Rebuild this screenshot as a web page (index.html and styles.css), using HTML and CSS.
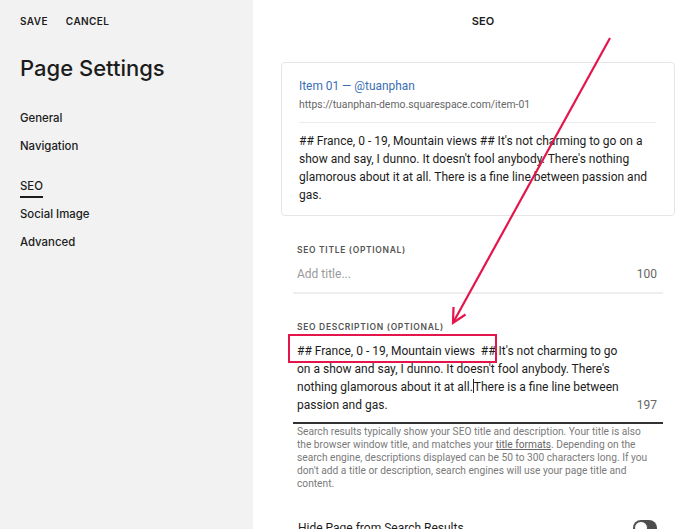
FILE: index.html
```html
<!DOCTYPE html>
<html lang="en">
<head>
    <meta charset="UTF-8">
    <title>Page Settings</title>
    <link rel="stylesheet" href="styles.css">
</head>
<body>

    <div class="sidebar">
        <div class="actions">
            <span>SAVE</span>
            <span>CANCEL</span>
        </div>
        <h1>Page Settings</h1>
        <ul class="nav">
            <li>General</li>
            <li class="gap-after">Navigation</li>
            <li class="active">SEO</li>
            <li>Social Image</li>
            <li>Advanced</li>
        </ul>
    </div>

    <div class="panel">
        <div class="panel-title">SEO</div>

        <div class="preview-card">
            <div class="preview-title">Item 01 — @tuanphan</div>
            <div class="preview-url">https://tuanphan-demo.squarespace.com/item-01</div>
            <p class="preview-text">## France, 0 - 19, Mountain views ## It's not charming to go on a show and say, I dunno. It doesn't fool anybody. There's nothing glamorous about it at all. There is a fine line between passion and gas.</p>
        </div>

        <div class="field">
            <div class="field-label">SEO TITLE (OPTIONAL)</div>
            <div class="field-input">
                <span class="placeholder">Add title...</span>
                <span class="count">100</span>
            </div>
        </div>

        <div class="field">
            <div class="field-label second">SEO DESCRIPTION (OPTIONAL)</div>
            <div class="field-input focused">
                <span class="desc-text">## France, 0 - 19, Mountain views&nbsp; ## It's not charming to go on a show and say, I dunno. It doesn't fool anybody. There's nothing glamorous about it at all.<span class="caret"></span>There is a fine line between passion and gas.</span>
                <span class="count">197</span>
            </div>
            <p class="help">Search results typically show your SEO title and description. Your title is also the browser window title, and matches your <u>title formats</u>. Depending on the search engine, descriptions displayed can be 50 to 300 characters long. If you don't add a title or description, search engines will use your page title and content.</p>
        </div>

        <div class="toggle-row">
            <span>Hide Page from Search Results</span>
            <span class="toggle"></span>
        </div>

        <!-- annotation drawn over the screenshot -->
        <div class="highlight-box"></div>
        <svg class="arrow" width="447" height="529" viewBox="0 0 447 529">
            <line x1="357" y1="38" x2="201" y2="321" stroke="#e3154a" stroke-width="2.2"/>
            <polyline points="200.5,307 200,323 212.5,314.5" fill="none" stroke="#e3154a" stroke-width="2.2" stroke-linejoin="miter"/>
        </svg>
    </div>

</body>
</html>
```

FILE: styles.css
```css
body {
    margin: 0;
    height: 529px;
    overflow: hidden;
    display: flex;
    font-family: "Inter", "Liberation Sans", sans-serif;
    color: #1c1c1c;
    background: #ffffff;
}

.sidebar {
    width: 253px;
    flex-shrink: 0;
    background-color: #f2f2f2;
    padding: 15px 20px 0 20px;
    box-sizing: border-box;
}

.actions {
    display: flex;
    gap: 18px;
    font-size: 10px;
    font-weight: 600;
    letter-spacing: 0.04em;
}

h1 {
    margin: 28px 0 0 0;
    font-size: 22px;
    font-weight: 500;
}

.nav {
    list-style-type: none;
    margin: 29px 0 0 0;
    padding: 0;
    font-size: 11.4px;
    font-weight: 500;
}

.nav li {
    line-height: 16px;
    margin-bottom: 12px;
}

.nav li.gap-after {
    margin-bottom: 24px;
}

.nav li.active {
    display: inline-block;
    border-bottom: 2px solid #1c1c1c;
    line-height: 16px;
    padding-bottom: 2px;
    margin-bottom: 8px;
}

.panel {
    flex: 1;
    min-width: 0;
    position: relative;
    padding: 0 25px 0 28px;
    font-family: "Roboto", "Liberation Sans", sans-serif;
}

.panel-title {
    text-align: center;
    font-family: "Inter", sans-serif;
    font-size: 11px;
    font-weight: 600;
    padding: 15px 0 0 10px;
    line-height: 12px;
}

.preview-card {
    margin-top: 35px;
    border: 1px solid #e6e6e6;
    border-radius: 4px;
    padding: 15px 18px 11px 17px;
}

.preview-title {
    color: #3b6fb4;
    font-size: 11.9px;
    line-height: 16px;
}

.preview-url {
    color: #666;
    font-size: 10.4px;
    line-height: 14px;
    margin-top: 4px;
    padding-bottom: 10px;
    border-bottom: 1px solid #ececec;
}

.preview-text {
    margin: 9px 0 0 0;
    font-size: 12px;
    line-height: 18px;
}

.field {
    margin: 0 12px 0 12px;
}

.field-label {
    margin-top: 28px;
    padding-left: 4px;
    font-family: "Inter", sans-serif;
    font-size: 8.5px;
    font-weight: 600;
    letter-spacing: 0.08em;
    color: #555;
    line-height: 12px;
}

.field-label.second {
    margin-top: 27px;
}

.field-input {
    display: flex;
    justify-content: space-between;
    align-items: flex-end;
    padding: 9px 6px 9px 4px;
    border-bottom: 2px solid #eeeeee;
    font-size: 12px;
    line-height: 18px;
}

.field-input.focused {
    border-bottom: 2px solid #333;
    padding-bottom: 8px;
}

.placeholder {
    color: #9a9a9a;
}

.count {
    color: #666;
    margin-left: 4px;
}

.desc-text {
    flex: 0 1 332px;
}

.caret {
    display: inline-block;
    width: 1px;
    height: 14px;
    background: #222;
    vertical-align: -2px;
}

.help {
    margin: 1px 0 0 0;
    padding: 0 7px 0 4px;
    font-size: 10.2px;
    line-height: 13px;
    color: #7a7a7a;
}

.help u {
    color: #666;
}

.toggle-row {
    margin: 30px 18px 0 17px;
    display: flex;
    justify-content: space-between;
    align-items: center;
    font-size: 12px;
    line-height: 16px;
}

.toggle {
    width: 24px;
    height: 16px;
    border-radius: 8px;
    background: #4d4d4d;
    position: relative;
}

.toggle::after {
    content: "";
    position: absolute;
    left: 1px;
    top: 1px;
    width: 12px;
    height: 12px;
    border-radius: 50%;
    border: 1px solid #4d4d4d;
    background: #fff;
}

.highlight-box {
    position: absolute;
    left: 35px;
    top: 334px;
    width: 209px;
    height: 29px;
    border: 2px solid #e3154a;
    box-sizing: border-box;
}

.arrow {
    position: absolute;
    left: 0;
    top: 0;
    pointer-events: none;
}
```
